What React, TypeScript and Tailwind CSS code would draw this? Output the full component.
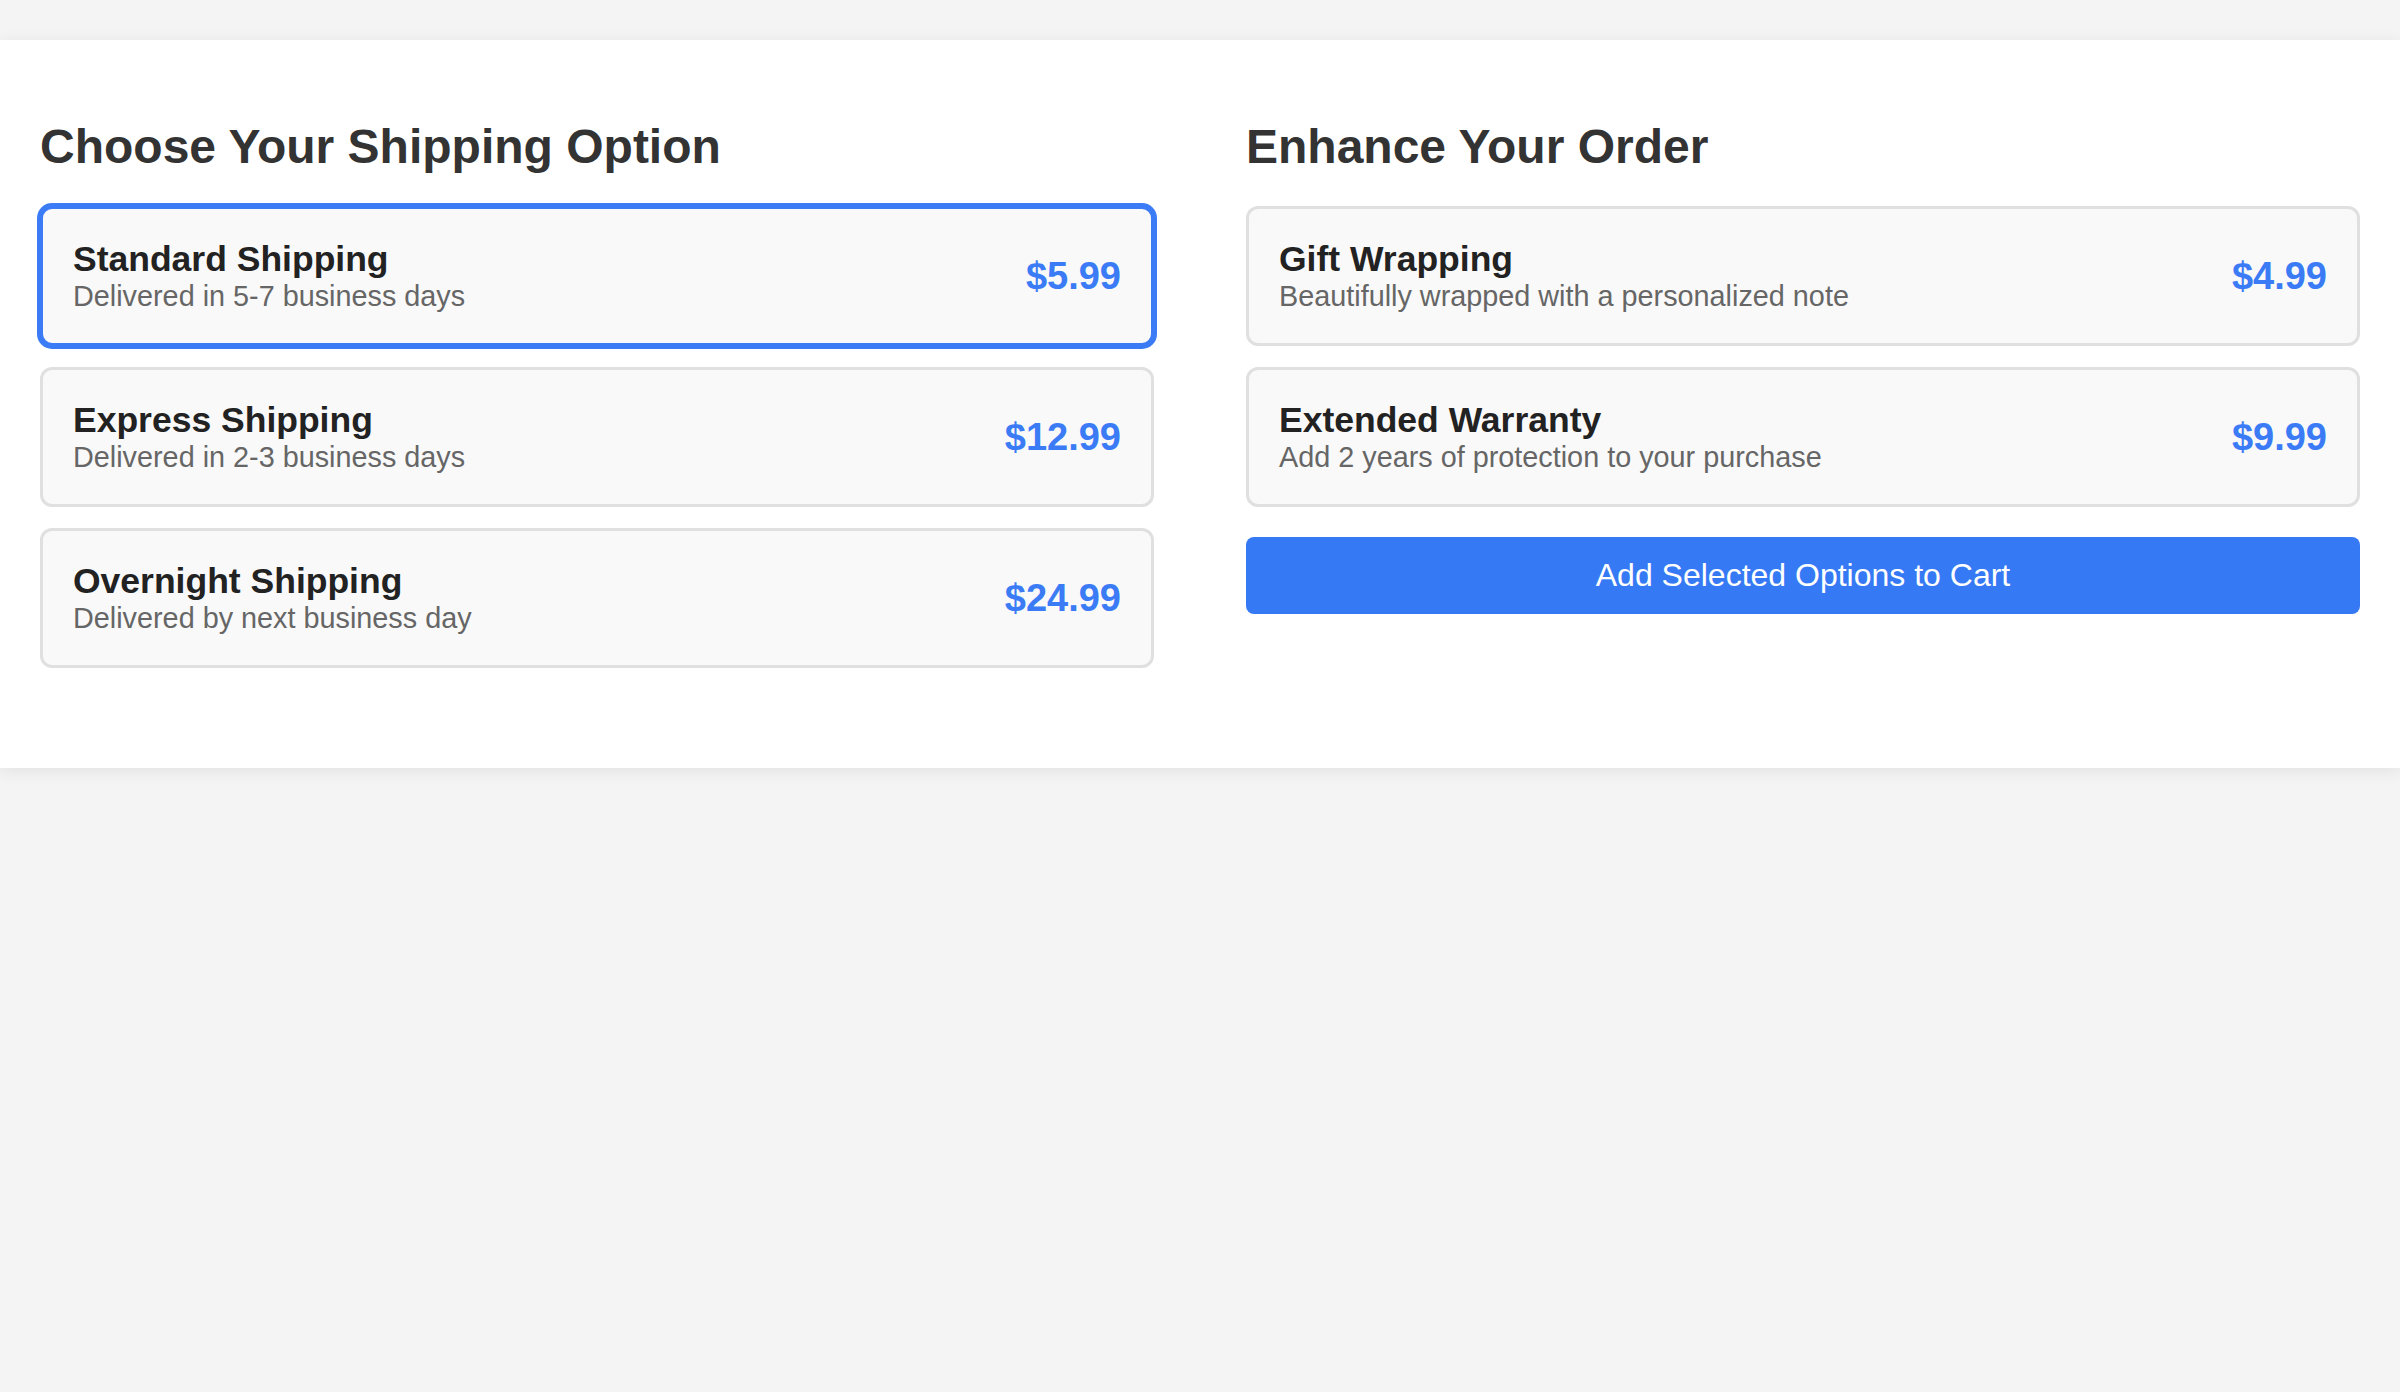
import { useState } from 'react'

const shippingOptions = [
  { id: 'standard', title: 'Standard Shipping', description: 'Delivered in 5-7 business days', price: '$5.99' },
  { id: 'express', title: 'Express Shipping', description: 'Delivered in 2-3 business days', price: '$12.99' },
  { id: 'overnight', title: 'Overnight Shipping', description: 'Delivered by next business day', price: '$24.99' }
]

const extras = [
  { id: 'gift', title: 'Gift Wrapping', description: 'Beautifully wrapped with a personalized note', price: '$4.99' },
  { id: 'warranty', title: 'Extended Warranty', description: 'Add 2 years of protection to your purchase', price: '$9.99' }
]

type Option = { id: string; title: string; description: string; price: string }

const OptionCard = ({ option, selected, onClick }: { option: Option; selected: boolean; onClick: () => void }) => (
  <div
    onClick={onClick}
    className={`flex items-center justify-between rounded-[12px] border-[3px] bg-[#f9f9f9] px-[30px] py-[30px] cursor-pointer ${
      selected ? 'border-[#3b7cf6] shadow-[0_0_0_3px_#3b7cf6]' : 'border-[#e0e0e0]'
    }`}
  >
    <div>
      <div className="text-[35.5px] leading-[41px] font-bold text-[#222]">{option.title}</div>
      <div className="text-[28.8px] leading-[33px] text-[#666]">{option.description}</div>
    </div>
    <div className="text-[38px] leading-[44px] font-bold text-[#3b7cf6]">{option.price}</div>
  </div>
)

export default function App() {
  const [shipping, setShipping] = useState('standard')
  const [chosen, setChosen] = useState<string[]>([])

  const toggle = (id: string) =>
    setChosen((prev) => (prev.includes(id) ? prev.filter((x) => x !== id) : [...prev, id]))

  return (
    <div className="min-h-screen bg-[#f4f4f4] pt-[40px] font-['Liberation_Sans',Arial,sans-serif]">
      <div className="bg-white px-[40px] pt-[40px] pb-[100px] shadow-[0_3px_15px_rgba(0,0,0,0.08)]">
        <div className="grid grid-cols-2 gap-[92px]">
          {/* Shipping */}
          <div>
            <h2 className="mt-[39px] mb-[32px] text-[48px] leading-[55px] font-bold text-[#333]">
              Choose Your Shipping Option
            </h2>
            <div className="flex flex-col gap-[21px]">
              {shippingOptions.map((option) => (
                <OptionCard
                  key={option.id}
                  option={option}
                  selected={shipping === option.id}
                  onClick={() => setShipping(option.id)}
                />
              ))}
            </div>
          </div>

          {/* Extras */}
          <div>
            <h2 className="mt-[39px] mb-[32px] text-[48px] leading-[55px] font-bold text-[#333]">
              Enhance Your Order
            </h2>
            <div className="flex flex-col gap-[21px]">
              {extras.map((option) => (
                <OptionCard
                  key={option.id}
                  option={option}
                  selected={chosen.includes(option.id)}
                  onClick={() => toggle(option.id)}
                />
              ))}
              <button className="mt-[9px] w-full rounded-[8px] bg-[#3679f5] py-[20px] text-[32px] leading-[37px] text-white">
                Add Selected Options to Cart
              </button>
            </div>
          </div>
        </div>
      </div>
    </div>
  )
}
